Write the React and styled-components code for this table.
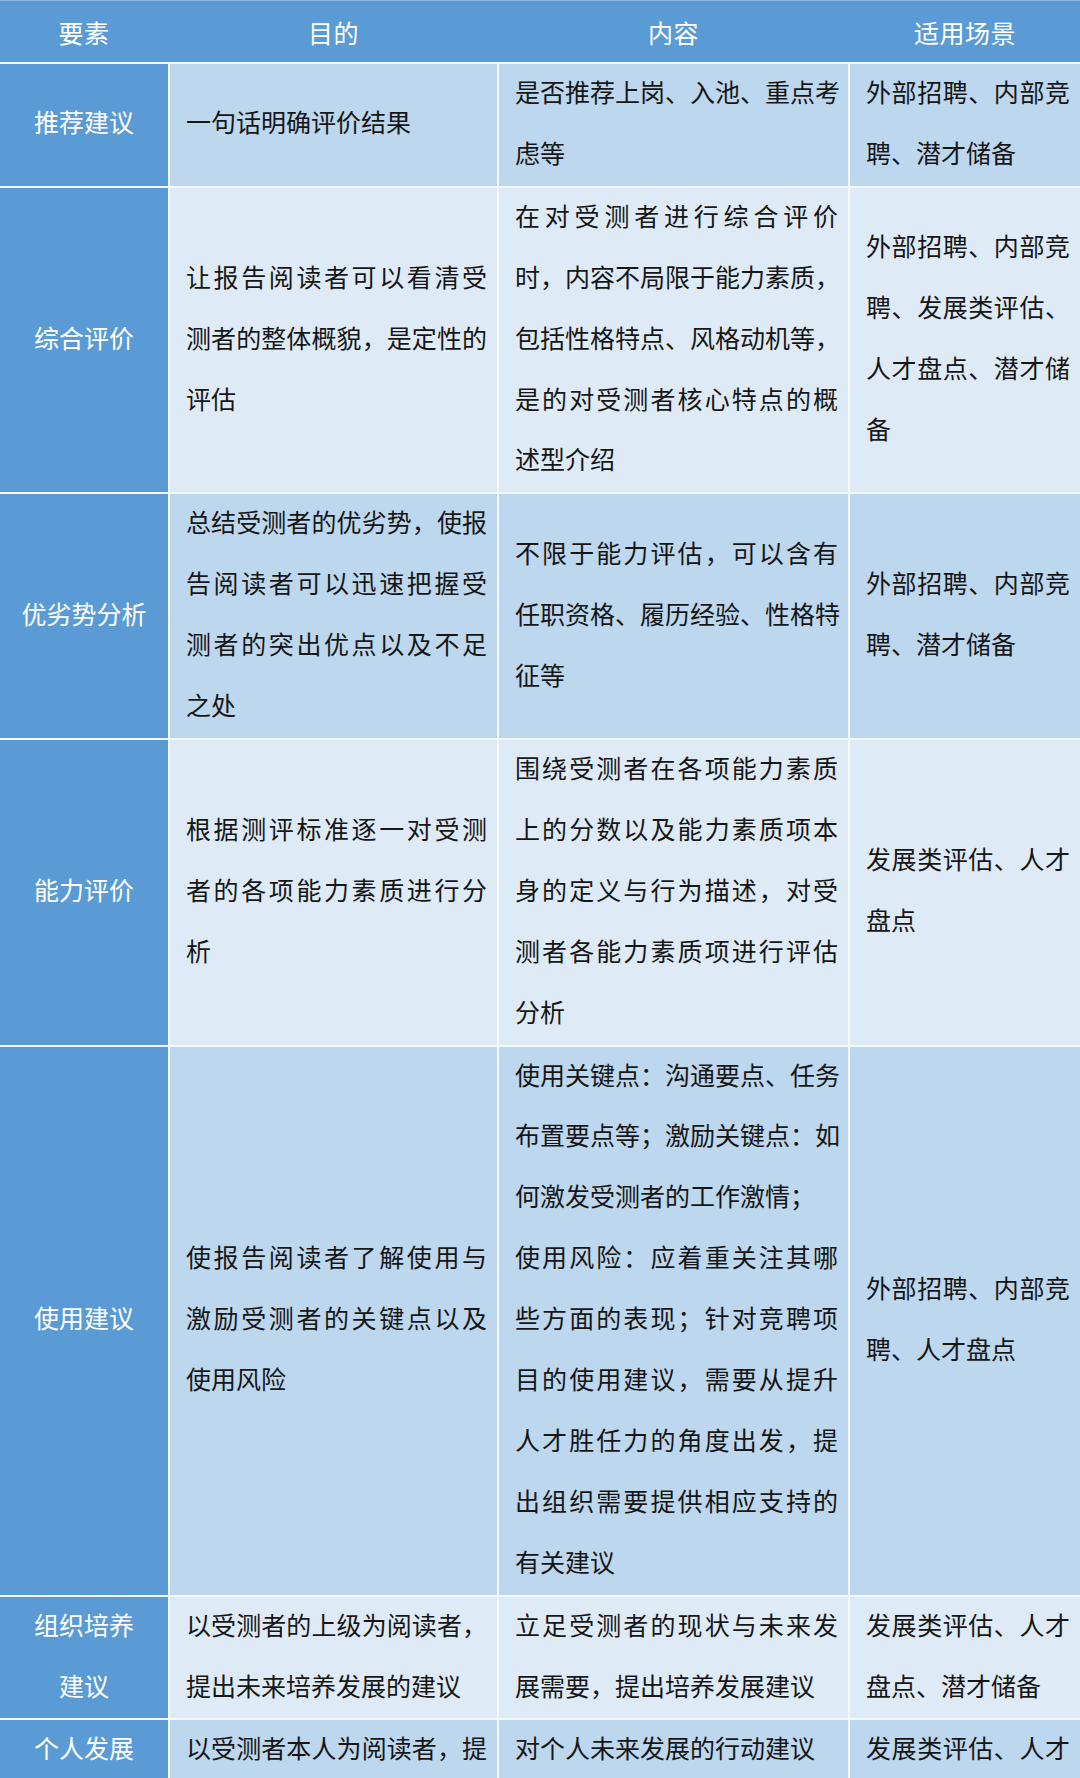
import React from 'react';
import styled, { createGlobalStyle } from 'styled-components';

const GlobalStyle = createGlobalStyle`
  html, body {
    margin: 0;
    padding: 0;
    background: #ffffff;
  }
  body {
    font-family: "Liberation Serif", "Noto Sans CJK SC", serif;
  }
`;

const COLS = '168px 327px 349px 1fr';

const Table = styled.div`
  display: flex;
  flex-direction: column;
  gap: 2px;
  width: 1080px;
  background: #f3f8fd;
  font-family: "Liberation Serif", "Noto Sans CJK SC", serif;
  font-size: 25px;
`;

const HeaderRow = styled.div`
  display: grid;
  grid-template-columns: ${COLS};
  column-gap: 2px;
  height: 61px;
  border-top: 1px solid #8fb8e2;
  background: #5b9bd5;
  color: #ffffff;
`;

const HeaderCell = styled.div`
  display: flex;
  align-items: center;
  justify-content: center;
  letter-spacing: 0.5px;
`;

const Row = styled.div`
  display: grid;
  grid-template-columns: ${COLS};
  column-gap: 2px;
`;

const toneBg = {
  key: '#5b9bd5',
  mid: '#bdd7ee',
  light: '#deebf7',
};

const Cell = styled.div`
  display: flex;
  flex-direction: column;
  justify-content: ${props => (props.$top ? 'flex-start' : 'center')};
  background: ${props => toneBg[props.$tone]};
  color: ${props => (props.$tone === 'key' ? '#ffffff' : '#161616')};
  padding: ${props => (props.$tone === 'key' ? '0 4px' : '0 10px 0 16px')};
  align-items: ${props => (props.$tone === 'key' ? 'center' : 'stretch')};
  overflow: hidden;
`;

const Line = styled.div`
  line-height: 60.9px;
  white-space: nowrap;
  text-align: ${props => (props.$justify ? 'justify' : 'left')};
  text-align-last: ${props => (props.$justify ? 'justify' : 'auto')};
  text-justify: inter-character;
`;

// a line ending with '|' is a full line that continues below the fold
const rows = [
  {
    key: ['推荐建议'],
    tone: 'mid',
    cells: [
      [['一句话明确评价结果']],
      [['是否推荐上岗、入池、重点考', '虑等']],
      [['外部招聘、内部竞', '聘、潜才储备']],
    ],
  },
  {
    key: ['综合评价'],
    tone: 'light',
    cells: [
      [['让报告阅读者可以看清受', '测者的整体概貌，是定性的', '评估']],
      [['在对受测者进行综合评价', '时，内容不局限于能力素质，', '包括性格特点、风格动机等，', '是的对受测者核心特点的概', '述型介绍']],
      [['外部招聘、内部竞', '聘、发展类评估、', '人才盘点、潜才储', '备']],
    ],
  },
  {
    key: ['优劣势分析'],
    tone: 'mid',
    cells: [
      [['总结受测者的优劣势，使报', '告阅读者可以迅速把握受', '测者的突出优点以及不足', '之处']],
      [['不限于能力评估，可以含有', '任职资格、履历经验、性格特', '征等']],
      [['外部招聘、内部竞', '聘、潜才储备']],
    ],
  },
  {
    key: ['能力评价'],
    tone: 'light',
    cells: [
      [['根据测评标准逐一对受测', '者的各项能力素质进行分', '析']],
      [['围绕受测者在各项能力素质', '上的分数以及能力素质项本', '身的定义与行为描述，对受', '测者各能力素质项进行评估', '分析']],
      [['发展类评估、人才', '盘点']],
    ],
  },
  {
    key: ['使用建议'],
    tone: 'mid',
    cells: [
      [['使报告阅读者了解使用与', '激励受测者的关键点以及', '使用风险']],
      [
        ['使用关键点：沟通要点、任务', '布置要点等；激励关键点：如', '何激发受测者的工作激情；'],
        ['使用风险：应着重关注其哪', '些方面的表现；针对竞聘项', '目的使用建议，需要从提升', '人才胜任力的角度出发，提', '出组织需要提供相应支持的', '有关建议'],
      ],
      [['外部招聘、内部竞', '聘、人才盘点']],
    ],
  },
  {
    key: ['组织培养', '建议'],
    tone: 'light',
    cells: [
      [['以受测者的上级为阅读者，', '提出未来培养发展的建议']],
      [['立足受测者的现状与未来发', '展需要，提出培养发展建议']],
      [['发展类评估、人才', '盘点、潜才储备']],
    ],
  },
  {
    key: ['个人发展'],
    tone: 'mid',
    top: true,
    cells: [
      [['以受测者本人为阅读者，提|']],
      [['对个人未来发展的行动建议']],
      [['发展类评估、人才|']],
    ],
  },
];

const CellText = ({ paragraphs }) => paragraphs.map((lines, p) => lines.map((text, i) => {
  const full = text.endsWith('|');
  return (
    <Line key={`${p}-${i}`} $justify={full || i < lines.length - 1}>
      {full ? text.slice(0, -1) : text}
    </Line>
  );
}));

const App = () => (
  <>
    <GlobalStyle />
    <Table>
      <HeaderRow>
        <HeaderCell>要素</HeaderCell>
        <HeaderCell>目的</HeaderCell>
        <HeaderCell>内容</HeaderCell>
        <HeaderCell>适用场景</HeaderCell>
      </HeaderRow>
      {rows.map(row => (
        <Row key={row.key.join('')}>
          <Cell $tone="key" $top={row.top}>
            {row.key.map(t => <Line key={t}>{t}</Line>)}
          </Cell>
          {row.cells.map((paragraphs, c) => (
            <Cell key={c} $tone={row.tone} $top={row.top}>
              <CellText paragraphs={paragraphs} />
            </Cell>
          ))}
        </Row>
      ))}
    </Table>
  </>
);

export default App;
